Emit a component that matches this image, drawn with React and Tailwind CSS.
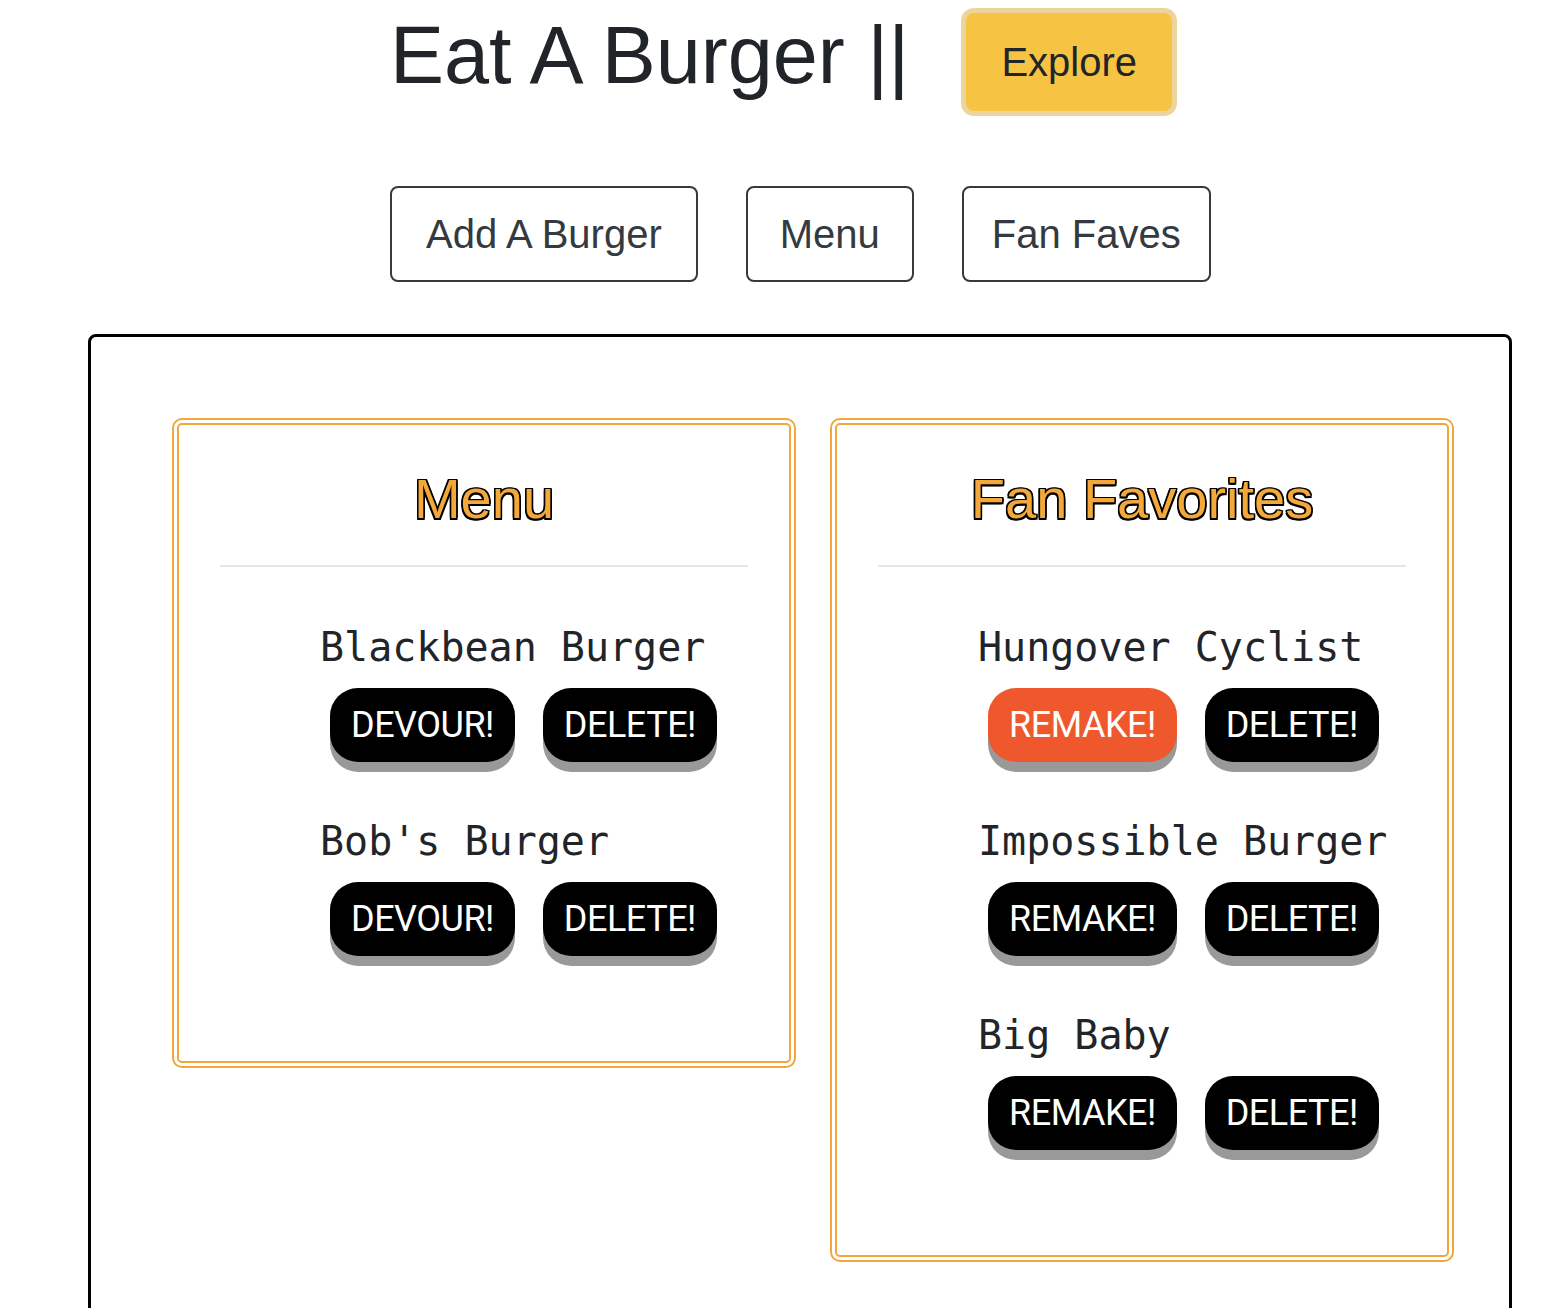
import React from "react";

const menu = ["Blackbean Burger", "Bob's Burger"];
const faves = ["Hungover Cyclist", "Impossible Burger", "Big Baby"];

const ActionButton = ({ label, hot }) => (
  <button
    className={`h-[74px] rounded-[28px] px-[21px] font-['Roboto',sans-serif] text-[36px] leading-none tracking-[-0.5px] text-white shadow-[0_10px_0_#999999] ${
      hot ? "bg-[#ee582c]" : "bg-black"
    }`}
  >
    {label}
  </button>
);

const Card = ({ title, items, action, hotIndex }) => (
  <div className="w-[624px] shrink-0 self-start rounded-[10px] border-[7px] border-double border-[#f1a73b] px-[41px] pt-[40px] pb-[50px]">
    <h2 className="text-center text-[56px] leading-[1.2] text-[#f4a83a] [text-shadow:-1.5px_-1.5px_0_#000,1.5px_-1.5px_0_#000,-1.5px_1.5px_0_#000,1.5px_1.5px_0_#000,0_-1.5px_0_#000,0_1.5px_0_#000,-1.5px_0_0_#000,1.5px_0_0_#000]">
      {title}
    </h2>
    <hr className="mt-[33px] border-t-2 border-[#e6e6e6]" />
    <div className="mt-[56px] pl-[100px]">
      {items.map((name, i) => (
        <div key={name} className="mb-[55px]">
          <p className="font-['DejaVu_Sans_Mono',monospace] text-[40px] leading-[1.2] text-[#212529]">
            {name}
          </p>
          <div className="mt-[17px] ml-[10px] flex gap-[28px]">
            <ActionButton label={action} hot={i === hotIndex} />
            <ActionButton label="DELETE!" />
          </div>
        </div>
      ))}
    </div>
  </div>
);

export default function App() {
  return (
    <div className="h-[1308px] overflow-hidden bg-white font-['Liberation_Sans',Arial,sans-serif] text-[#212529]">
      {/* header */}
      <div className="flex items-start pl-[390px]">
        <h1 className="mt-[7px] text-[81px] leading-[1.2] font-medium">Eat A Burger ||</h1>
        <button className="mt-[13px] ml-[57px] rounded-lg bg-[#f6c343] px-[35px] py-[19px] text-[40px] leading-[1.5] shadow-[0_0_0_5px_#ecd59c]">
          Explore
        </button>
      </div>

      <div className="mt-[75px] flex gap-[48px] pl-[390px]">
        <button className="rounded-lg border-2 border-[#343a40] px-[34px] py-[16px] text-[40px] leading-[1.5] text-[#343a40]">
          Add A Burger
        </button>
        <button className="rounded-lg border-2 border-[#343a40] px-[32px] py-[16px] text-[40px] leading-[1.5] text-[#343a40]">
          Menu
        </button>
        <button className="rounded-lg border-2 border-[#343a40] px-[28px] py-[16px] text-[40px] leading-[1.5] text-[#343a40]">
          Fan Faves
        </button>
      </div>

      {/* burger board */}
      <div className="mt-[52px] ml-[88px] flex h-[1100px] w-[1424px] gap-[34px] rounded-t-lg border-[3px] border-black pt-[81px] pl-[81px]">
        <Card title="Menu" items={menu} action="DEVOUR!" hotIndex={-1} />
        <Card title="Fan Favorites" items={faves} action="REMAKE!" hotIndex={0} />
      </div>
    </div>
  );
}
